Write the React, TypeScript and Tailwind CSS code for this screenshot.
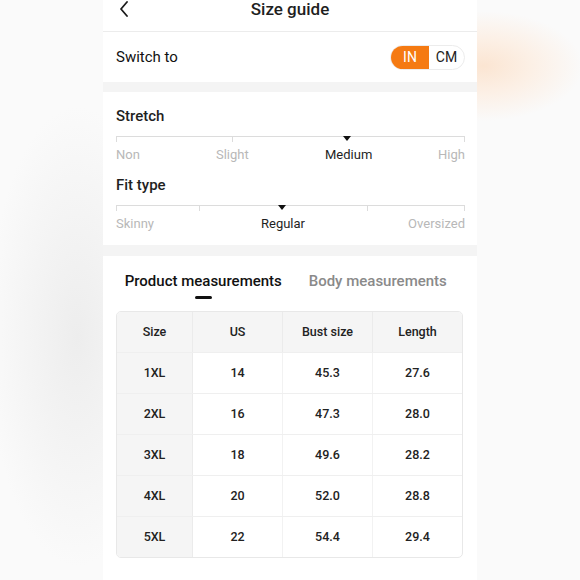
import React, { useState } from "react";

const rows = [
  { size: "1XL", us: "14", bust: "45.3", length: "27.6" },
  { size: "2XL", us: "16", bust: "47.3", length: "28.0" },
  { size: "3XL", us: "18", bust: "49.6", length: "28.2" },
  { size: "4XL", us: "20", bust: "52.0", length: "28.8" },
  { size: "5XL", us: "22", bust: "54.4", length: "29.4" },
];

function Triangle({ className }: { className: string }) {
  return (
    <span
      className={`absolute top-0 h-0 w-0 border-x-[4.5px] border-t-[5px] border-x-transparent border-t-[#111] ${className}`}
    />
  );
}

export default function App() {
  const [unit, setUnit] = useState<"IN" | "CM">("IN");
  const [tab, setTab] = useState(0);

  return (
    <div className="flex h-[580px] w-[580px] overflow-hidden bg-[#fafafa] font-[Roboto,'Noto_Sans',sans-serif] text-[#1f1f1f]">
      {/* blurred backdrop, left */}
      <div className="w-[103px] shrink-0 bg-[radial-gradient(ellipse_90px_230px_at_75%_58%,#ededed,#fafafa)]" />

      {/* sheet */}
      <div className="flex w-[374px] shrink-0 flex-col bg-[#f4f4f4]">
        {/* header */}
        <div className="h-[32px] border-b border-[#ececec] bg-white px-[13px]">
          <div className="relative flex h-[20px] items-center justify-center">
            <svg
              className="absolute left-[3px] top-[1px]"
              width="10"
              height="16"
              viewBox="0 0 10 16"
              fill="none"
              stroke="#1a1a1a"
              strokeWidth="1.8"
              strokeLinecap="round"
              strokeLinejoin="round"
            >
              <path d="M8 1 L2 8 L8 15" />
            </svg>
            <span className="text-[17px] font-medium">Size guide</span>
          </div>
        </div>

        {/* unit switch */}
        <div className="flex h-[50px] items-center justify-between bg-white pl-[13px] pr-[12px]">
          <span className="text-[15px] text-[#111]">Switch to</span>
          <div className="flex h-[25px] overflow-hidden rounded-full border border-[#ececec] text-[14px]">
            <button
              onClick={() => setUnit("IN")}
              className={`w-[38px] ${unit === "IN" ? "bg-[#f57a12] text-white" : "text-[#222]"}`}
            >
              IN
            </button>
            <button
              onClick={() => setUnit("CM")}
              className={`w-[35px] ${unit === "CM" ? "bg-[#f57a12] text-white" : "text-[#222]"}`}
            >
              CM
            </button>
          </div>
        </div>

        {/* stretch / fit */}
        <div className="mt-[10px] bg-white px-[13px] pb-[13px] pt-[14px]">
          <div className="text-[15px] font-medium leading-[20px]">Stretch</div>
          <div className="relative mt-[10px] flex h-[6px] w-[349px]">
            <div className="w-[116px] border-l border-t border-[#dcdcdc]" />
            <div className="flex-1 border-x border-t border-[#dcdcdc]" />
            <Triangle className="left-[227px]" />
          </div>
          <div className="mt-[5px] grid w-[349px] grid-cols-6 text-[13px] leading-[16px] text-[#b8b8b8]">
            <span className="text-left">Non</span>
            <span className="col-span-2 text-center">Slight</span>
            <span className="col-span-2 text-center text-[#1f1f1f]">Medium</span>
            <span className="text-right">High</span>
          </div>

          <div className="mt-[12px] text-[15px] font-medium leading-[20px]">Fit type</div>
          <div className="relative mt-[10px] flex h-[6px] w-[349px]">
            <div className="w-[83px] border-l border-t border-[#dcdcdc]" />
            <div className="w-[168px] border-l border-t border-[#dcdcdc]" />
            <div className="flex-1 border-x border-t border-[#dcdcdc]" />
            <Triangle className="left-[162px]" />
          </div>
          <div className="mt-[5px] grid w-[349px] grid-cols-[134px_66px_1fr] text-[13px] leading-[16px] text-[#b8b8b8]">
            <span className="text-left">Skinny</span>
            <span className="text-center text-[#1f1f1f]">Regular</span>
            <span className="text-right">Oversized</span>
          </div>
        </div>

        {/* measurements */}
        <div className="mt-[11px] flex-1 bg-white px-[13px] pt-[15px]">
          <div className="flex w-[349px]">
            {["Product measurements", "Body measurements"].map((label, i) => (
              <button
                key={label}
                onClick={() => setTab(i)}
                className="flex flex-1 flex-col items-center"
              >
                <span
                  className={`text-[15px] font-medium leading-[20px] ${
                    tab === i ? "text-[#111]" : "text-[#8a8a8a]"
                  }`}
                >
                  {label}
                </span>
                <span
                  className={`mt-[5px] h-[3px] w-[17px] rounded-full ${
                    tab === i ? "bg-[#111]" : "bg-transparent"
                  }`}
                />
              </button>
            ))}
          </div>

          <div className="mt-[12px] w-[347px] overflow-hidden rounded-[5px] border border-[#e8e8e8] text-[12.5px] font-medium text-[#222]">
            <div className="grid h-[40px] grid-cols-[76px_90px_90px_1fr] bg-[#f5f5f5]">
              <div className="flex items-center justify-center border-r border-[#ebebeb]">Size</div>
              <div className="flex items-center justify-center border-r border-[#ebebeb]">US</div>
              <div className="flex items-center justify-center border-r border-[#ebebeb]">Bust size</div>
              <div className="flex items-center justify-center">Length</div>
            </div>
            {rows.map((r) => (
              <div
                key={r.size}
                className="grid h-[41px] grid-cols-[76px_90px_90px_1fr] border-t border-[#efefef]"
              >
                <div className="flex items-center justify-center border-r border-[#ebebeb] bg-[#f5f5f5]">
                  {r.size}
                </div>
                <div className="flex items-center justify-center border-r border-[#f2f2f2]">{r.us}</div>
                <div className="flex items-center justify-center border-r border-[#f2f2f2]">{r.bust}</div>
                <div className="flex items-center justify-center">{r.length}</div>
              </div>
            ))}
          </div>
        </div>
      </div>

      {/* blurred backdrop, right */}
      <div className="flex-1 bg-[radial-gradient(ellipse_100px_55px_at_6px_66px,#fbe5d2,#fcf0e6_50%,#fafafa_100%)]" />
    </div>
  );
}
